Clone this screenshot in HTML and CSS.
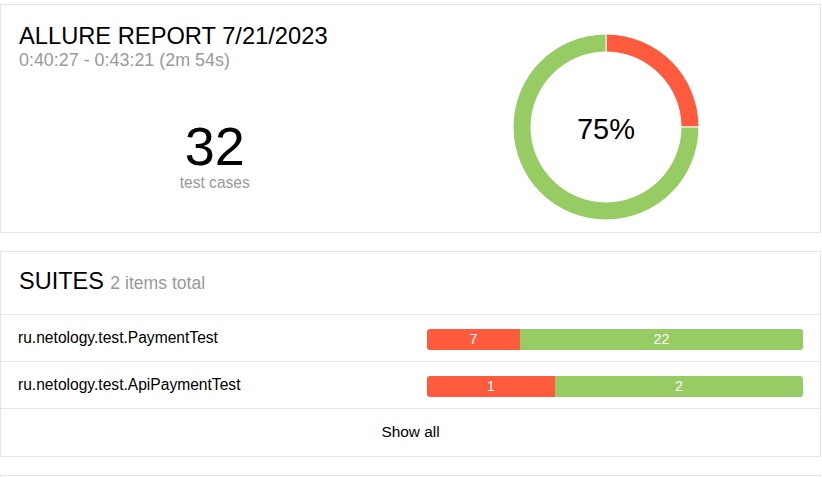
FILE: index.html
```html
<!DOCTYPE html>
<html>
<head>
<meta charset="utf-8">
<link rel="stylesheet" href="styles.css">
</head>
<body>
<div class="page">
  <section class="card summary">
    <div class="summary-left">
      <h1 class="title">ALLURE REPORT 7/21/2023</h1>
      <div class="subtitle">0:40:27 - 0:43:21 (2m 54s)</div>
      <div class="count">
        <div class="count-num">32</div>
        <div class="count-label">test cases</div>
      </div>
    </div>
    <div class="summary-right">
      <svg class="donut" width="186" height="186" viewBox="0 0 186 186">
        <path d="M93,0 A93,93 0 0 1 186,93 L168,93 A75,75 0 0 0 93,18 Z" fill="#fd5a3e" stroke="#fff" stroke-width="1"/>
        <path d="M186,93 A93,93 0 1 1 93,0 L93,18 A75,75 0 1 0 168,93 Z" fill="#97cc64" stroke="#fff" stroke-width="1"/>
        <text x="93" y="105" text-anchor="middle" class="donut-text">75%</text>
      </svg>
    </div>
  </section>

  <section class="card suites">
    <div class="suites-header">
      <span class="suites-title">SUITES</span>
      <span class="suites-count">2 items total</span>
    </div>
    <div class="suite-row">
      <div class="suite-name">ru.netology.test.PaymentTest</div>
      <div class="suite-bar-cell">
        <div class="bar">
          <div class="seg failed" style="width:24.7%">7</div>
          <div class="seg passed">22</div>
        </div>
      </div>
    </div>
    <div class="suite-row">
      <div class="suite-name">ru.netology.test.ApiPaymentTest</div>
      <div class="suite-bar-cell">
        <div class="bar">
          <div class="seg failed" style="width:34%">1</div>
          <div class="seg passed">2</div>
        </div>
      </div>
    </div>
    <div class="show-all">Show all</div>
  </section>

  <section class="card next"></section>
</div>
</body>
</html>
```

FILE: styles.css
```css
html, body {
  margin: 0;
  padding: 0;
  background: #fff;
}

body {
  font-family: "Liberation Sans", Arial, sans-serif;
  color: #000;
  overflow: hidden;
}

.page {
  padding-top: 4px;
  width: 821px;
  display: flex;
  flex-direction: column;
  gap: 18px;
}

.card {
  border: 1px solid #e5e5e5;
  background: #fff;
  box-sizing: border-box;
}

/* Summary widget */
.summary {
  display: grid;
  grid-template-columns: 1fr 1fr;
  padding: 18px 18px 12px 18px;
}

.summary-left {
  display: flex;
  flex-direction: column;
}

.title {
  margin: 0;
  font-weight: normal;
  font-size: 23.7px;
  line-height: 26.4px;
}

.subtitle {
  color: #999;
  font-size: 17.9px;
  line-height: 19.4px;
  margin-top: 2px;
}

.count {
  margin-top: 47px;
  text-align: center;
}

.count-num {
  font-size: 54px;
  line-height: 56px;
}

.count-label {
  color: #999;
  font-size: 15.6px;
  line-height: 16px;
  margin-top: 1px;
}

.summary-right {
  display: flex;
  justify-content: center;
  padding-top: 11px;
}

.donut {
  display: block;
}

.donut-text {
  font-family: "Liberation Sans", Arial, sans-serif;
  font-size: 29px;
  fill: #000;
}

/* Suites widget */
.suites-header {
  padding: 16px 18px 16px 18px;
  border-bottom: 1px solid #e8e8e8;
  line-height: 26.6px;
}

.suites-title {
  font-size: 23.5px;
}

.suites-count {
  color: #999;
  font-size: 17.6px;
  margin-left: 2px;
}

.suite-row {
  display: grid;
  grid-template-columns: 1fr 1fr;
  align-items: center;
  height: 46px;
  padding: 0 17px;
  border-bottom: 1px solid #e8e8e8;
}

.suite-name {
  font-size: 15.6px;
  padding-top: 1px;
}

.suite-bar-cell {
  padding-left: 16.5px;
  padding-top: 3px;
}

.bar {
  display: flex;
  height: 21px;
  border-radius: 3px;
  overflow: hidden;
  color: #fff;
  font-size: 14.3px;
  line-height: 21px;
}

.seg {
  text-align: center;
}

.seg.failed {
  background: #fd5a3e;
}

.seg.passed {
  background: #97cc64;
  flex: 1;
}

.show-all {
  height: 47px;
  display: flex;
  align-items: center;
  justify-content: center;
  font-size: 15.4px;
}

.next {
  height: 40px;
}
```
